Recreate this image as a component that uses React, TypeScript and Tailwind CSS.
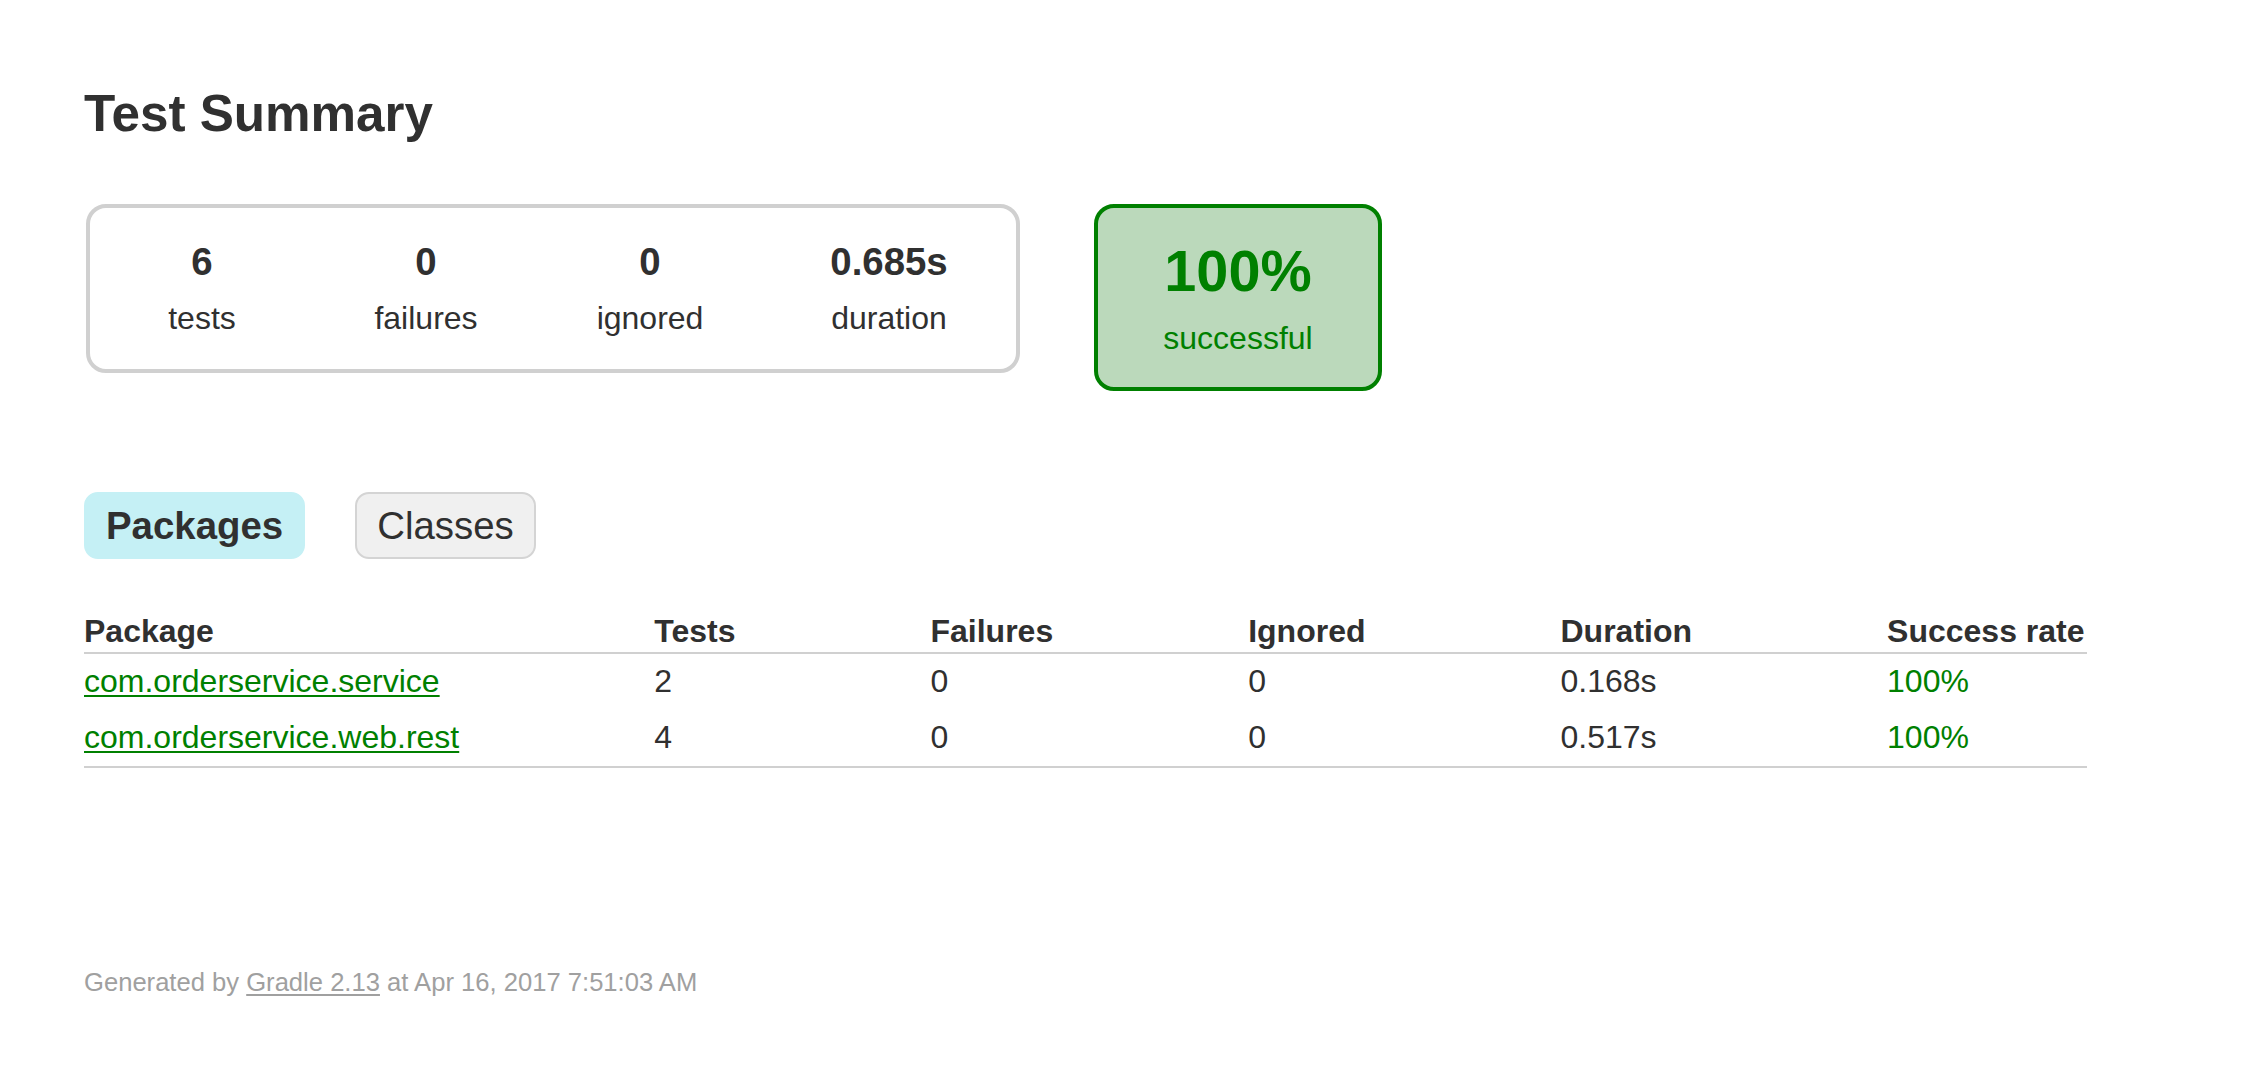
const stats = [
  { value: '6', label: 'tests', width: 'w-[224px]' },
  { value: '0', label: 'failures', width: 'w-[224px]' },
  { value: '0', label: 'ignored', width: 'w-[224px]' },
  { value: '0.685s', label: 'duration', width: 'w-[254px]' },
]

const packages = [
  { name: 'com.orderservice.service', tests: 2, failures: 0, ignored: 0, duration: '0.168s', rate: '100%' },
  { name: 'com.orderservice.web.rest', tests: 4, failures: 0, ignored: 0, duration: '0.517s', rate: '100%' },
]

const headers = ['Package', 'Tests', 'Failures', 'Ignored', 'Duration', 'Success rate']

const InfoBox = ({ value, label, width }: { value: string; label: string; width: string }) => (
  <div className={`${width} py-[32px] text-center`}>
    <div className="mb-[16px] text-[38.4px] leading-[44px] font-bold">{value}</div>
    <p className="text-[32px] leading-[37px]">{label}</p>
  </div>
)

export default function App() {
  return (
    <div className="min-h-screen bg-white pt-[84px] pl-[84px] pb-[60px] font-['Liberation_Sans',Arial,Helvetica,sans-serif] text-[#303030]">
      <h1 className="text-[51.2px] leading-[59px] font-bold whitespace-nowrap">Test Summary</h1>

      {/* Summary */}
      <div className="mt-[61px] flex items-start pl-[2px]">
        <div className="flex rounded-[20px] border-4 border-[#d0d0d0]">
          {stats.map((s) => (
            <InfoBox key={s.label} {...s} />
          ))}
        </div>
        <div className="ml-[74px] w-[288px] rounded-[20px] border-4 border-[#008000] bg-[#bbd9bb] py-[30px] text-center text-[#008000]">
          <div className="mb-[16px] text-[57.6px] leading-[66px] font-bold">100%</div>
          <p className="text-[32px] leading-[37px]">successful</p>
        </div>
      </div>

      {/* Tabs */}
      <ul className="mt-[101px] flex gap-[50px]">
        <li className="rounded-[14px] border-2 border-[#c5f0f5] bg-[#c5f0f5] px-[20px] py-[10px]">
          <h2 className="text-[38.4px] leading-[43px] font-bold">Packages</h2>
        </li>
        <li className="rounded-[14px] border-2 border-[#d4d4d4] bg-[#f0f0f0] px-[20px] py-[10px]">
          <a className="block text-[38.4px] leading-[43px]">Classes</a>
        </li>
      </ul>

      {/* Packages table */}
      <table className="mt-[52px] border-b-2 border-[#d0d0d0] text-[32px]">
        <thead>
          <tr>
            {headers.map((h) => (
              <th
                key={h}
                className="border-b-2 border-[#d0d0d0] pt-[2px] pr-[2px] pb-[2px] pl-[193px] text-left leading-[37px] font-bold whitespace-nowrap first:pl-0"
              >
                {h}
              </th>
            ))}
          </tr>
        </thead>
        <tbody>
          {packages.map((p) => (
            <tr key={p.name}>
              <td className="pt-[9px] pr-[2px] pb-[10px] leading-[37px] whitespace-nowrap">
                <a className="text-[#008000] underline decoration-2 underline-offset-[3px]">{p.name}</a>
              </td>
              <td className="pt-[9px] pr-[2px] pb-[10px] pl-[193px] leading-[37px]">{p.tests}</td>
              <td className="pt-[9px] pr-[2px] pb-[10px] pl-[193px] leading-[37px]">{p.failures}</td>
              <td className="pt-[9px] pr-[2px] pb-[10px] pl-[193px] leading-[37px]">{p.ignored}</td>
              <td className="pt-[9px] pr-[2px] pb-[10px] pl-[193px] leading-[37px]">{p.duration}</td>
              <td className="pt-[9px] pr-[2px] pb-[10px] pl-[193px] leading-[37px] text-[#008000]">{p.rate}</td>
            </tr>
          ))}
        </tbody>
      </table>

      {/* Footer */}
      <p className="mt-[200px] text-[25.6px] leading-[29px] whitespace-nowrap text-[#a0a0a0]">
        Generated by <a className="underline decoration-2 underline-offset-[3px]">Gradle 2.13</a> at Apr 16, 2017 7:51:03 AM
      </p>
    </div>
  )
}
